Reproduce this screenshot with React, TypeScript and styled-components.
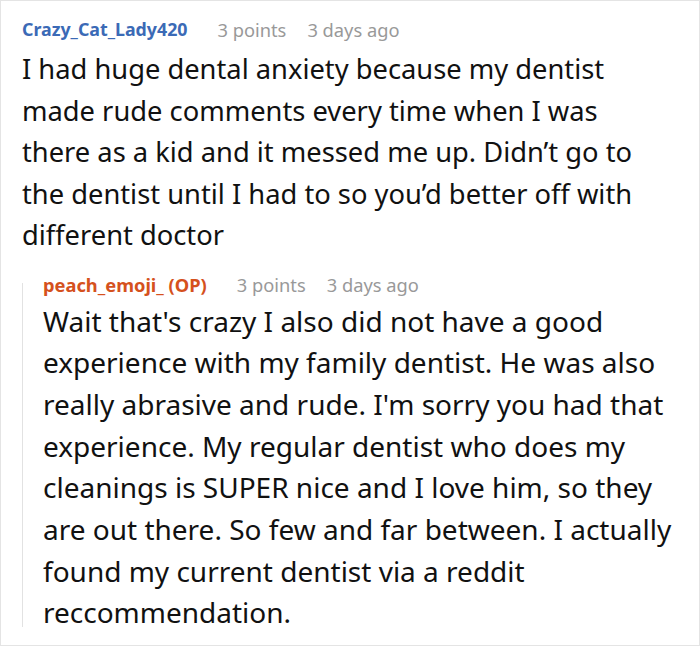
import React from "react";
import styled, { createGlobalStyle } from "styled-components";

const Global = createGlobalStyle`
  html, body { margin: 0; padding: 0; background: #fff; }
  body { font-family: "Noto Sans", "Open Sans", sans-serif; }
`;

const Frame = styled.div`
  box-sizing: border-box;
  width: 700px;
  height: 646px;
  border: 1px solid #e4e4e4;
  padding: 10px 20px 0 21px;
  overflow: hidden;
`;

const Header = styled.div`
  display: flex;
  align-items: center;
  height: 36px;
  white-space: nowrap;
`;

const User = styled.span<{ $color: string; $size: number }>`
  font-weight: 700;
  font-size: ${(p) => p.$size}px;
  color: ${(p) => p.$color};
  margin-right: 30px;
`;

const Meta = styled.span`
  font-size: 18.3px;
  color: #999;
  margin-right: 21px;
`;

const Body = styled.p<{ $size: number; $lh: number; $max: number; $top: number }>`
  margin: ${(p) => p.$top}px 0 0;
  max-width: ${(p) => p.$max}px;
  font-size: ${(p) => p.$size}px;
  line-height: ${(p) => p.$lh}px;
  color: #111;
`;

const Reply = styled.div`
  margin-top: 11px;
  display: flex;
`;

const Rail = styled.div`
  width: 1px;
  background: #e2e2e2;
  margin: 16px 20px 7px 0;
  flex: none;
`;

const ReplyContent = styled.div`
  flex: 1;
`;

type CommentProps = {
  user: string;
  color: string;
  userSize: number;
  size: number;
  lh: number;
  max: number;
  top: number;
  body: string;
};

const Comment = ({ user, color, userSize, size, lh, max, top, body }: CommentProps) => (
  <>
    <Header>
      <User $color={color} $size={userSize}>
        {user}
      </User>
      <Meta>3 points</Meta>
      <Meta>3 days ago</Meta>
    </Header>
    <Body $size={size} $lh={lh} $max={max} $top={top}>
      {body}
    </Body>
  </>
);

export default function App() {
  return (
    <Frame>
      <Global />
      <Comment
        user="Crazy_Cat_Lady420"
        color="#3b6ab6"
        userSize={17.8}
        size={27.3}
        lh={41.5}
        max={640}
        top={1}
        body="I had huge dental anxiety because my dentist made rude comments every time when I was there as a kid and it messed me up. Didn’t go to the dentist until I had to so you’d better off with different doctor"
      />
      <Reply>
        <Rail />
        <ReplyContent>
          <Comment
            user="peach_emoji_ (OP)"
            color="#d5511d"
            userSize={18.3}
            size={28}
            lh={41.7}
            max={650}
            top={-2}
            body="Wait that's crazy I also did not have a good experience with my family dentist. He was also really abrasive and rude. I'm sorry you had that experience. My regular dentist who does my cleanings is SUPER nice and I love him, so they are out there. So few and far between. I actually found my current dentist via a reddit reccommendation."
          />
        </ReplyContent>
      </Reply>
    </Frame>
  );
}
